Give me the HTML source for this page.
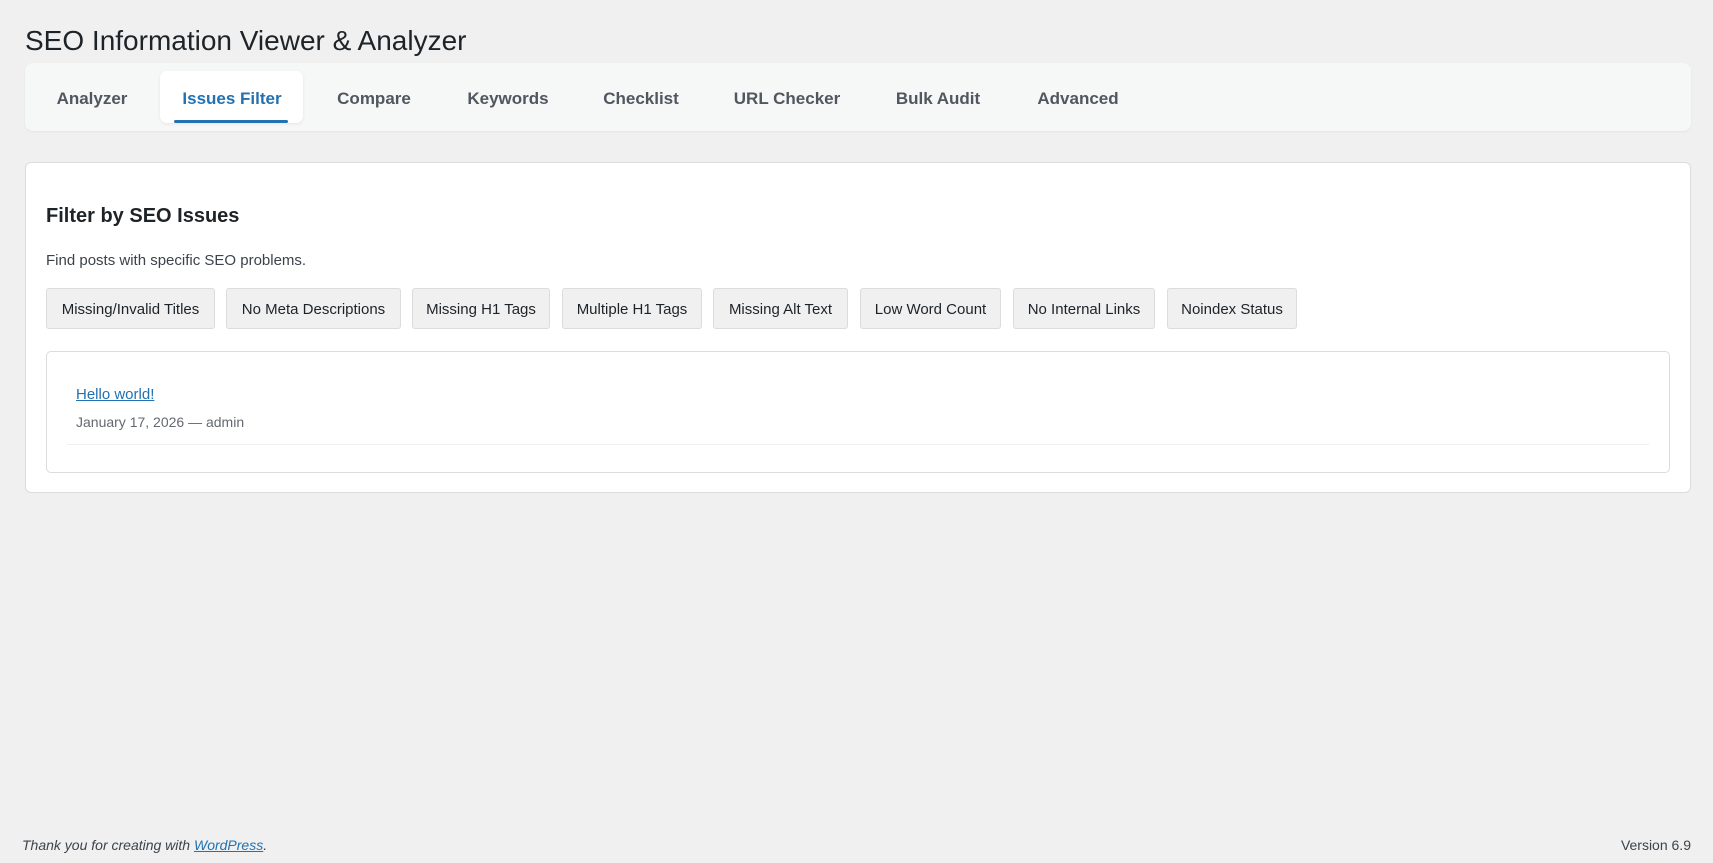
<!DOCTYPE html>
<html><head><meta charset="utf-8"><style>
*{margin:0;padding:0;box-sizing:border-box}
body{width:1713px;height:863px;background:#f0f0f1;font-family:"Liberation Sans",sans-serif;color:#1d2327;position:relative;overflow:hidden}
.a{position:absolute;white-space:nowrap}
h1{position:absolute;left:25px;top:25px;font-size:28px;font-weight:400;color:#1d2327}
.nav{position:absolute;left:25px;top:63px;width:1666px;height:68px;background:#f6f7f7;border-radius:8px;box-shadow:0 1px 2px rgba(0,0,0,.05)}
.act{position:absolute;left:160px;top:71px;width:143px;height:52px;background:#fff;border-radius:7px;box-shadow:0 1px 3px rgba(0,0,0,.08)}
.ul{position:absolute;left:174px;top:120px;width:114px;height:3px;background:#2271b1;border-radius:2px}
.tab{position:absolute;top:89px;font-size:17px;font-weight:bold;color:#50575e;transform:translateX(-50%)}
.card{position:absolute;left:25px;top:162px;width:1666px;height:331px;background:#fff;border:1px solid #dcdcde;border-radius:6px}
.btn{position:absolute;top:288px;height:41px;padding-top:2px;background:#f0f0f1;border:1px solid #dcdcde;border-radius:3px;font-size:15px;color:#1d2327;display:flex;align-items:center;justify-content:center}
.inner{position:absolute;left:46px;top:351px;width:1624px;height:122px;border:1px solid #dcdcde;border-radius:5px;background:#fff}
</style></head><body>
<h1>SEO Information Viewer &amp; Analyzer</h1>
<div class="nav"></div>
<div class="act"></div>
<div class="ul"></div>
<div class="tab" style="left:92px">Analyzer</div>
<div class="tab" style="left:232px;color:#2271b1">Issues Filter</div>
<div class="tab" style="left:374px">Compare</div>
<div class="tab" style="left:508px">Keywords</div>
<div class="tab" style="left:641px">Checklist</div>
<div class="tab" style="left:787px">URL Checker</div>
<div class="tab" style="left:938px">Bulk Audit</div>
<div class="tab" style="left:1078px">Advanced</div>
<div class="card"></div>
<div class="a" style="left:46px;top:205px;font-size:20px;font-weight:bold">Filter by SEO Issues</div>
<div class="a" style="left:46px;top:252px;font-size:15px;color:#3c434a">Find posts with specific SEO problems.</div>
<div class="btn" style="left:46px;width:169px">Missing/Invalid Titles</div>
<div class="btn" style="left:226px;width:175px">No Meta Descriptions</div>
<div class="btn" style="left:412px;width:138px">Missing H1 Tags</div>
<div class="btn" style="left:562px;width:140px">Multiple H1 Tags</div>
<div class="btn" style="left:713px;width:135px">Missing Alt Text</div>
<div class="btn" style="left:860px;width:141px">Low Word Count</div>
<div class="btn" style="left:1013px;width:142px">No Internal Links</div>
<div class="btn" style="left:1167px;width:130px">Noindex Status</div>
<div class="inner"></div>
<div class="a" style="left:76px;top:386px;font-size:15px;color:#2271b1;text-decoration:underline">Hello world!</div>
<div class="a" style="left:76px;top:414px;font-size:14px;color:#646970">January 17, 2026 — admin</div>
<div class="a" style="left:67px;top:444px;width:1582px;height:1px;background:#f0f0f1"></div>
<div class="a" style="left:22px;top:837px;font-size:14px;font-style:italic;color:#3c434a">Thank you for creating with <span style="color:#2271b1;text-decoration:underline">WordPress</span>.</div>
<div class="a" style="right:22px;top:837px;font-size:14px;color:#3c434a">Version 6.9</div>
</body></html>
